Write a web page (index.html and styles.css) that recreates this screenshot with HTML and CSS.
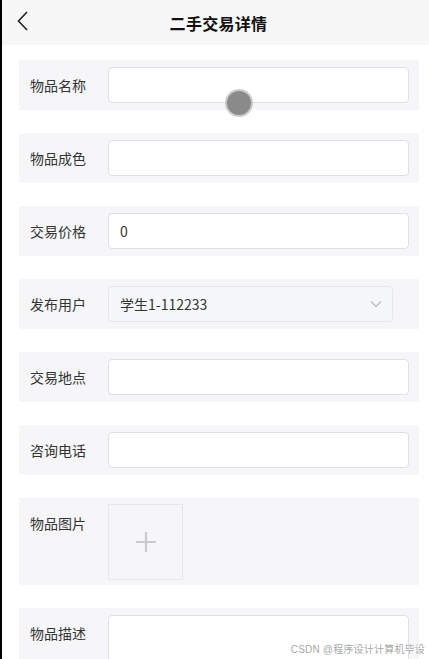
FILE: index.html
```html
<!DOCTYPE html>
<html lang="zh">
<head>
<meta charset="utf-8">
<link rel="stylesheet" href="styles.css">
</head>
<body>
<div class="page">
  <header class="nav">
    <svg class="back" width="14" height="20" viewBox="0 0 14 20"><path d="M11 1 L2.5 10 L11 19" fill="none" stroke="#222" stroke-width="1.6"/></svg>
    <h1 class="title">二手交易详情</h1>
  </header>
  <main class="form">
    <div class="row"><span class="label">物品名称</span><div class="input"></div></div>
    <div class="row"><span class="label">物品成色</span><div class="input"></div></div>
    <div class="row"><span class="label">交易价格</span><div class="input">0</div></div>
    <div class="row"><span class="label">发布用户</span><div class="select"><span>学生1-112233</span><svg width="12" height="8" viewBox="0 0 12 8"><path d="M1 1.5 L6 6.5 L11 1.5" fill="none" stroke="#b4b8bf" stroke-width="1.1"/></svg></div></div>
    <div class="row"><span class="label">交易地点</span><div class="input"></div></div>
    <div class="row"><span class="label">咨询电话</span><div class="input"></div></div>
    <div class="row row-top"><span class="label">物品图片</span><div class="upload"><svg width="22" height="22" viewBox="0 0 22 22"><path d="M11 1 V21 M1 11 H21" stroke="#c8cbd1" stroke-width="2.2"/></svg></div></div>
    <div class="row row-top"><span class="label">物品描述</span><div class="textarea"></div></div>
  </main>
  <div class="touch"></div>
  <div class="watermark">CSDN @程序设计计算机毕设</div>
</div>
</body>
</html>
```
FILE: styles.css
```css
* { box-sizing: border-box; margin: 0; padding: 0; }
html, body { width: 429px; height: 659px; overflow: hidden; background: #fff; }
body { font-family: "Noto Sans CJK SC", "Noto Sans", sans-serif; color: #333; }
.page { position: relative; height: 659px; overflow: hidden; border-left: 2px solid #000; background: #fff; }
.nav { height: 45px; background: #f7f7f8; display: flex; align-items: center; justify-content: center; position: relative; }
.back { position: absolute; left: 14px; top: 11px; }
.title { font-size: 16px; font-weight: 700; color: #111; margin-left: 6px; letter-spacing: 0.3px; }
.form { padding: 15px 10px 0 17px; display: flex; flex-direction: column; gap: 23px; }
.row { background: #f6f6f9; display: flex; align-items: center; padding: 7px 10px 7px 11px; min-height: 50px; }
.row-top { align-items: flex-start; }
.label { width: 78px; flex: none; font-size: 14px; color: #333; line-height: 20px; }
.row-top .label { margin-top: 8px; }
.input { flex: 1; height: 36px; background: #fff; border: 1px solid #dcdfe6; border-radius: 4px; padding: 0 11px; display: flex; align-items: center; font-size: 14px; color: #333; }
.select { width: 286px; height: 36px; background: #f5f7fa; border: 1px solid #e4e7ed; border-radius: 4px; padding: 0 10px 0 11px; display: flex; align-items: center; justify-content: space-between; font-size: 14px; color: #333; margin-right: 16px; }
.upload { width: 75px; height: 76px; border: 1px solid #e6e7eb; background: #f6f6f9; display: flex; align-items: center; justify-content: center; margin-top: -1px; margin-bottom: -2px; }
.textarea { flex: 1; height: 80px; background: #fff; border: 1px solid #dcdfe6; border-radius: 4px; }
.touch { position: absolute; left: 225px; top: 91px; width: 24px; height: 24px; border-radius: 50%; background: #8a8a8a; box-shadow: 0 0 0 2px rgba(170,170,170,0.6); }
.watermark { position: absolute; right: 4px; top: 641px; font-size: 10px; color: #a8a8a8; text-shadow: 0 0 2px #fff, 0 0 2px #fff; font-family: "Liberation Sans", "Noto Sans CJK SC", sans-serif; letter-spacing: 0.2px; }
```
